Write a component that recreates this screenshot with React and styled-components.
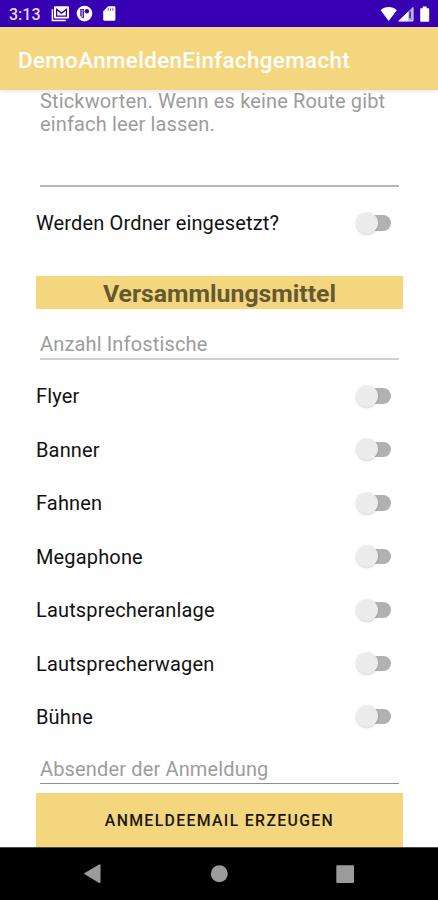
import { useState } from 'react';
import styled, { createGlobalStyle } from 'styled-components';

const GlobalStyle = createGlobalStyle`
  * {
    box-sizing: border-box;
  }

  body {
    margin: 0;
    background: #fff;
    font-family: Roboto, "Liberation Sans", sans-serif;
  }
`;

const equipment = [
    'Flyer',
    'Banner',
    'Fahnen',
    'Megaphone',
    'Lautsprecheranlage',
    'Lautsprecherwagen',
    'Bühne',
];

const SwitchRow = ({ label }) => {
    const [isOn, setIsOn] = useState(false);

    return (
        <Row>
            <RowLabel>{label}</RowLabel>
            <Switch
                type="button"
                role="switch"
                aria-checked={isOn}
                aria-label={label}
                onClick={() => setIsOn(!isOn)}
            >
                <Track $on={isOn} />
                <Thumb $on={isOn} />
            </Switch>
        </Row>
    )
}

const App = () => {
    return (
        <Phone>
            <GlobalStyle />
            <StatusBar>
                <Clock>3:13</Clock>
                <NotificationIcons width="66" height="18" viewBox="0 0 66 18">
                    <path d="M1.4 4.2v11.2h13.4" fill="none" stroke="#fff" strokeWidth="1.5" />
                    <rect x="3" y="1.3" width="15" height="12.2" rx="1.2" fill="#fff" />
                    <path d="M5.6 11.2V4.4l4.9 3.7 4.9-3.7v6.8z" fill="none" stroke="#3700b3" strokeWidth="1.3" />
                    <circle cx="33.5" cy="8.6" r="7.8" fill="#fff" />
                    <path d="M29.3 3.9h3.6v9.6a5.2 5.2 0 0 1-3.6-3z" fill="#3700b3" />
                    <path d="M31.1 4.6v7.6" stroke="#fff" strokeWidth="0.9" />
                    <circle cx="35.9" cy="6.2" r="2.2" fill="#3700b3" />
                    <path d="M57.2 1.2h6c.7 0 1.2.5 1.2 1.2v12.2c0 .7-.5 1.2-1.2 1.2h-9.8c-.7 0-1.2-.5-1.2-1.2V6.2z" fill="#fff" />
                    <path d="M57.3 3.2v2.6M59.6 3.2v2.6M61.9 3.2v2.6" stroke="#6f49c8" strokeWidth="1" />
                </NotificationIcons>
                <SystemIcons width="51" height="18" viewBox="0 0 51 18">
                    <path d="M1.6 5.2C6 1 13.4 1 17.8 5.2L9.7 15.9z" fill="#fff" />
                    <path d="M19.2 16.3L34 2v14.3z" fill="#b4a0e2" />
                    <path d="M19.2 16.3L29.4 6.4v9.9z" fill="#fff" />
                    <path d="M34 2.4v13.5H19.9" fill="none" stroke="#e6def6" strokeWidth="1" />
                    <path d="M31.1 6.6v6.6" stroke="#3700b3" strokeWidth="1.3" />
                    <path d="M43.7 1.6h4v1.6h1.5c.6 0 1 .4 1 1v11.6c0 .6-.4 1-1 1h-7c-.6 0-1-.4-1-1V4.2c0-.6.4-1 1-1h1.5z" fill="#fff" />
                </SystemIcons>
            </StatusBar>
            <AppBar>
                <Title>DemoAnmeldenEinfachgemacht</Title>
            </AppBar>
            <Form>
                <RouteField>
                    Stickworten. Wenn es keine Route gibt<br />einfach leer lassen.
                </RouteField>
                <FirstRow>
                    <SwitchRow label="Werden Ordner eingesetzt?" />
                </FirstRow>
                <SectionTitle>Versammlungsmittel</SectionTitle>
                <StandField>Anzahl Infostische</StandField>
                {equipment.map((item) => <SwitchRow key={item} label={item} />)}
                <SenderField>Absender der Anmeldung</SenderField>
                <SubmitButton type="button">ANMELDEEMAIL ERZEUGEN</SubmitButton>
            </Form>
            <NavBar>
                <svg width="438" height="52" viewBox="0 0 438 52" fill="#9b9b9b">
                    <path d="M84.2 25.3l15-8.8c.6-.4 1.3 0 1.3.7v17c0 .7-.7 1.1-1.3.7l-15-8.8c-.3-.2-.3-.6 0-.8z" />
                    <circle cx="219.3" cy="25.7" r="8.5" />
                    <rect x="336.3" y="17.2" width="17.7" height="17.7" rx="1.2" />
                </svg>
            </NavBar>
        </Phone>
    )
}

const Phone = styled.div`
  display: flex;
  flex-direction: column;
  width: 438px;
  height: 900px;
  overflow: hidden;
  background: #fff;
`;

const StatusBar = styled.header`
  display: flex;
  flex: none;
  align-items: center;
  height: 27px;
  padding: 0 8px 0 9px;
  background: #3700b3;
`;

const Clock = styled.span`
  width: 42px;
  color: #e4dbf5;
  font-size: 16px;
  font-weight: 500;
  line-height: 27px;
  padding-top: 2px;
`;

const NotificationIcons = styled.svg`
  display: block;
  margin-top: 1px;
`;

const SystemIcons = styled.svg`
  display: block;
  margin-left: auto;
`;

const AppBar = styled.div`
  display: flex;
  flex: none;
  align-items: center;
  height: 63px;
  padding: 3px 18px 0;
  background: #f4d67f;
  box-shadow: 0 1px 4px rgba(0, 0, 0, 0.12);
  z-index: 1;
`;

const Title = styled.h1`
  margin: 0;
  color: #fff;
  font-size: 22.3px;
  font-weight: 500;
  letter-spacing: 0.4px;
  white-space: nowrap;
`;

const Form = styled.main`
  flex: none;
  height: 757px;
  padding: 0 35px 0 36px;
  overflow: hidden;
`;

const Field = styled.div`
  margin: 0 4px 0 4px;
  color: #9c9c9c;
  font-size: 20px;
  letter-spacing: 0.15px;
  line-height: 23.4px;
  white-space: nowrap;
`;

const RouteField = styled(Field)`
  height: 96.5px;
  border-bottom: 2px solid #b8b8b8;
`;

const StandField = styled(Field)`
  height: 51px;
  margin-bottom: 9.2px;
  padding-top: 23.5px;
  border-bottom: 2px solid #d0d0d0;
`;

const SenderField = styled(Field)`
  height: 40.3px;
  margin-bottom: 9px;
  padding-top: 14px;
  border-bottom: 1px solid #8f8f8f;
`;

const FirstRow = styled.div`
  padding: 10px 0 26.5px;
`;

const Row = styled.div`
  display: flex;
  align-items: center;
  justify-content: space-between;
  height: 53.45px;
  padding-right: 12px;
`;

const RowLabel = styled.span`
  color: #111;
  font-size: 20px;
  letter-spacing: 0.15px;
  line-height: 24px;
  white-space: nowrap;
`;

const Switch = styled.button`
  position: relative;
  width: 36px;
  height: 24px;
  padding: 0;
  border: 0;
  background: none;
`;

const Track = styled.span`
  position: absolute;
  top: 4px;
  right: 0;
  width: 31px;
  height: 15.5px;
  border-radius: 8px;
  background: ${({ $on }) => ($on ? '#f4d67f' : '#b1b1b1')};
`;

const Thumb = styled.span`
  position: absolute;
  top: 0.5px;
  left: ${({ $on }) => ($on ? '14px' : '0.5px')};
  width: 22px;
  height: 22px;
  border-radius: 50%;
  background: #ececec;
  box-shadow: 0 1px 2px rgba(0, 0, 0, 0.18);
`;

const SectionTitle = styled.h2`
  height: 33px;
  margin: 0;
  color: #655932;
  background: #f4d67f;
  font-size: 24.8px;
  font-weight: 700;
  line-height: 36px;
  text-align: center;
`;

const SubmitButton = styled.button`
  display: block;
  width: 100%;
  height: 55px;
  padding: 1px 0 0;
  border: 0;
  color: #1c170b;
  background: #f4d67f;
  font-family: inherit;
  font-size: 15.8px;
  font-weight: 500;
  letter-spacing: 1.35px;
`;

const NavBar = styled.nav`
  flex: none;
  height: 53px;
  border-top: 1px solid #4a4a4a;
  background: #000;

  svg {
    display: block;
  }
`;

export default App
